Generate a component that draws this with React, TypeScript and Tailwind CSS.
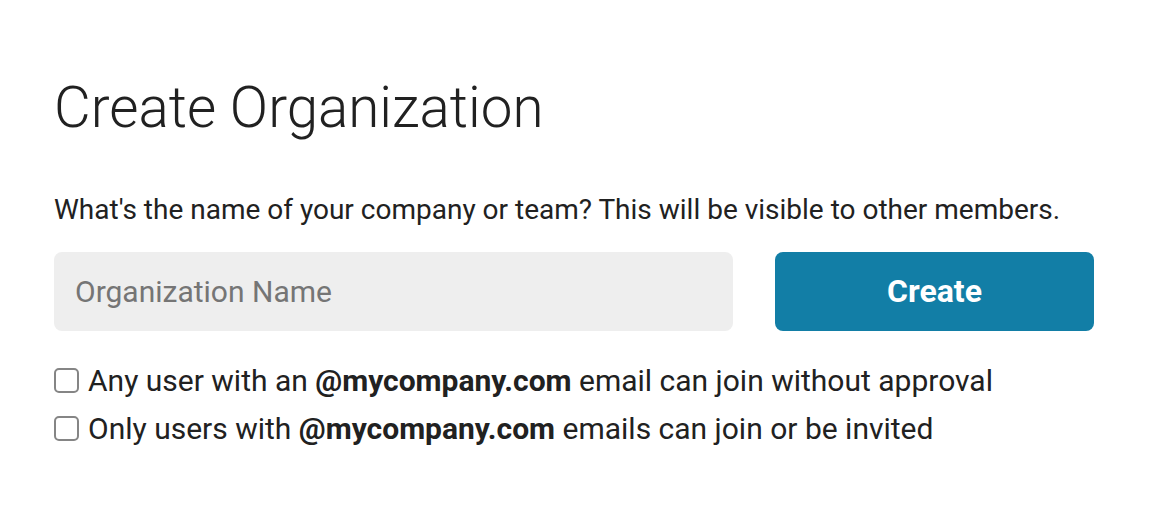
import { useState } from "react";

export default function App() {
  const [name, setName] = useState("");
  const [anyUser, setAnyUser] = useState(false);
  const [onlyUsers, setOnlyUsers] = useState(false);

  return (
    <div className="min-h-[518px] w-full bg-white font-['Roboto',sans-serif] text-[#212121]">
      <div className="px-[54px] pt-[80px]">
        <h1 className="text-[56.5px] font-light leading-none">Create Organization</h1>
        <p className="mt-[59px] text-[28px] leading-none">
          What's the name of your company or team? This will be visible to other members.
        </p>

        <div className="mt-[28px] flex gap-[42px]">
          <input
            value={name}
            onChange={(e) => setName(e.target.value)}
            placeholder="Organization Name"
            className="h-[79px] w-[679px] rounded-lg bg-[#eeeeee] px-[21px] text-[30px] text-[#212121] placeholder:text-[#757575] outline-none"
          />
          <button className="h-[79px] w-[319px] rounded-lg bg-[#127ea6] text-[32px] font-bold text-white">
            Create
          </button>
        </div>

        <div className="mt-[26px] flex flex-col text-[30px] leading-[48px]">
          <label className="flex items-center gap-[9px]">
            <input
              type="checkbox"
              checked={anyUser}
              onChange={(e) => setAnyUser(e.target.checked)}
              className="h-[25px] w-[25px] shrink-0 appearance-none rounded-[5px] border-2 border-[#858585] bg-white"
            />
            <span>
              Any user with an <b className="font-bold">@mycompany.com</b> email can join without approval
            </span>
          </label>
          <label className="flex items-center gap-[9px]">
            <input
              type="checkbox"
              checked={onlyUsers}
              onChange={(e) => setOnlyUsers(e.target.checked)}
              className="h-[25px] w-[25px] shrink-0 appearance-none rounded-[5px] border-2 border-[#858585] bg-white"
            />
            <span>
              Only users with <b className="font-bold">@mycompany.com</b> emails can join or be invited
            </span>
          </label>
        </div>
      </div>
    </div>
  );
}
